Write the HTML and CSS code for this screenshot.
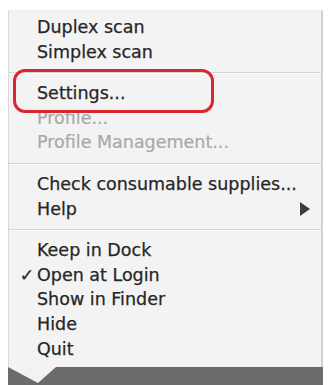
FILE: index.html
```html
<!DOCTYPE html>
<html>
<head>
<meta charset="utf-8">
<link rel="stylesheet" href="styles.css">
</head>
<body>
<div class="wrap">
  <div class="menu">
    <div class="row"><span class="chk"></span><span class="lbl">Duplex scan</span></div>
    <div class="row"><span class="chk"></span><span class="lbl">Simplex scan</span></div>
    <div class="sep"></div>
    <div class="row"><span class="chk"></span><span class="lbl">Settings...</span></div>
    <div class="row off"><span class="chk"></span><span class="lbl">Profile...</span></div>
    <div class="row off"><span class="chk"></span><span class="lbl">Profile Management...</span></div>
    <div class="sep"></div>
    <div class="row"><span class="chk"></span><span class="lbl">Check consumable supplies...</span></div>
    <div class="row"><span class="chk"></span><span class="lbl">Help</span>
      <svg class="sub" width="10" height="14" viewBox="0 0 10 14"><path d="M0 0 L10 7 L0 14 Z" fill="#3c3c3c"/></svg>
    </div>
    <div class="sep"></div>
    <div class="row"><span class="chk"></span><span class="lbl">Keep in Dock</span></div>
    <div class="row"><span class="chk">✓</span><span class="lbl">Open at Login</span></div>
    <div class="row"><span class="chk"></span><span class="lbl">Show in Finder</span></div>
    <div class="row"><span class="chk"></span><span class="lbl">Hide</span></div>
    <div class="row"><span class="chk"></span><span class="lbl">Quit</span></div>
    <div class="highlight"></div>
  </div>
  <div class="dock">
    <svg class="pointer" width="50" height="18" viewBox="0 0 50 18"><path d="M0 0 L48 0 L30 16 L0 0 Z" fill="#f2f2f2"/></svg>
  </div>
</div>
</body>
</html>
```

FILE: styles.css
```css
html, body {
  margin: 0;
  padding: 0;
  background: #ffffff;
}
body {
  width: 329px;
  height: 385px;
  overflow: hidden;
  font-family: "DejaVu Sans", Verdana, sans-serif;
}
.wrap {
  padding: 10px 0 0 8px;
  width: 315px;
}
.menu {
  position: relative;
  background: #f3f3f3;
  border-left: 1px solid #d8d8d8;
  border-right: 2px solid #d2d2d2;
  border-top: 1px solid #ececec;
  padding: 4px 0 0 0;
  height: 357px;
  box-sizing: border-box;
}
.row {
  display: grid;
  grid-template-columns: 28px 1fr auto;
  align-items: center;
  height: 24.6px;
  font-size: 17.5px;
  line-height: 24.6px;
  color: #262626;
  -webkit-text-stroke: 0.25px #262626;
  padding-right: 11px;
}
.row.off {
  color: #a9a9a9;
  -webkit-text-stroke: 0.2px #a9a9a9;
}
.chk {
  text-align: right;
  padding-right: 3px;
  font-size: 17px;
}
.lbl {
  white-space: nowrap;
}
.sub {
  display: block;
}
.sep {
  height: 17px;
  display: flex;
  align-items: center;
}
.sep::before {
  content: "";
  display: block;
  width: 100%;
  height: 1px;
  background: #d4d4d4;
  box-shadow: 0 1px 0 #fbfbfb;
}
.highlight {
  position: absolute;
  left: 4px;
  top: 58px;
  width: 201px;
  height: 44px;
  box-sizing: border-box;
  border: 3px solid #d9262f;
  border-radius: 12px;
}
.dock {
  position: relative;
  height: 18px;
  background: #6b6b6b;
  width: 315px;
}
.pointer {
  position: absolute;
  left: 0;
  top: 0;
}
```
